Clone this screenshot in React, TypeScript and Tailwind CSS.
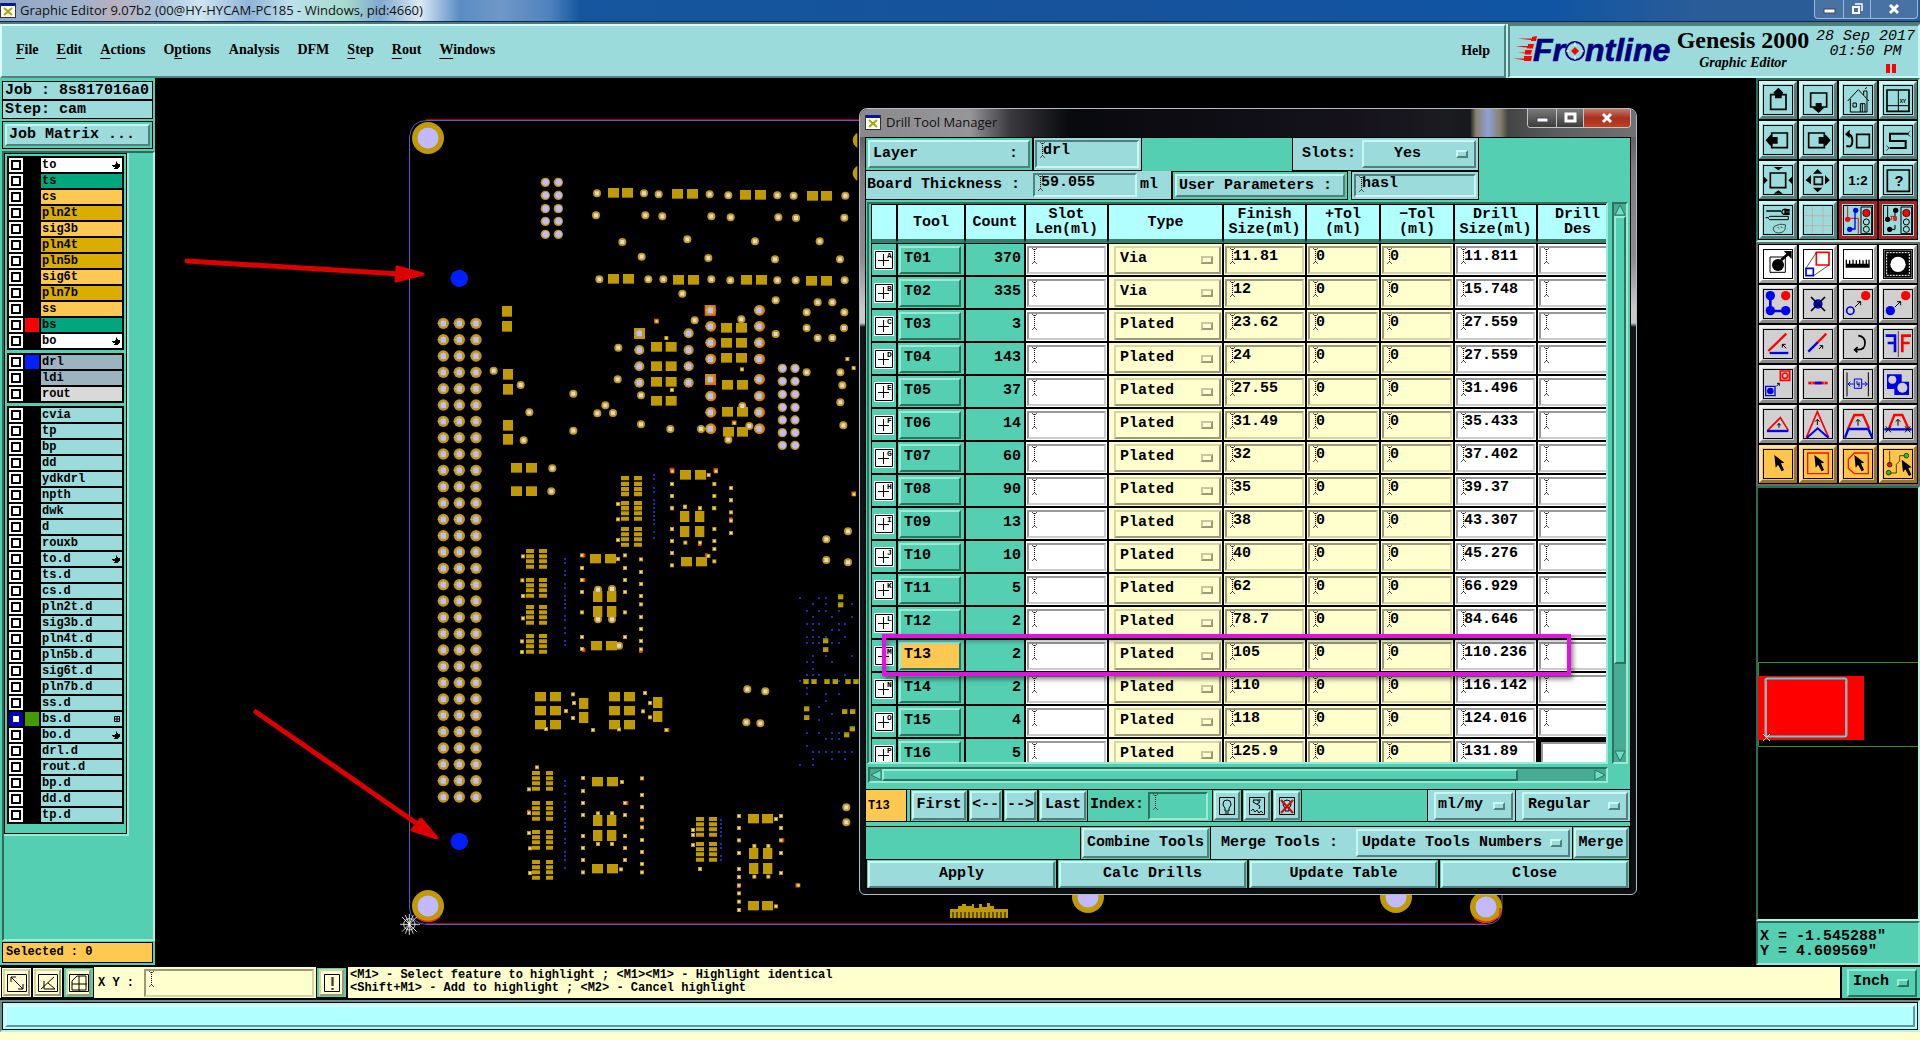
import React from "react";

const MONO = "font-['Liberation_Mono','DejaVu_Sans_Mono',monospace] font-bold";
const SERIF = "font-['Liberation_Serif',serif] font-bold";
const UI = "font-['Open_Sans','Noto_Sans',sans-serif]";

const OUT = "border-2 border-t-[#c9f7f3] border-l-[#c9f7f3] border-b-[#52807f] border-r-[#52807f]";
const IN = "border-2 border-t-[#52807f] border-l-[#52807f] border-b-[#c9f7f3] border-r-[#c9f7f3]";
const OUT_GREEN = "border-2 border-t-[#98ecd6] border-l-[#98ecd6] border-b-[#2b735f] border-r-[#2b735f]";
const IN_GREEN = "border-2 border-t-[#2b735f] border-l-[#2b735f] border-b-[#98ecd6] border-r-[#98ecd6]";
const OUT_YELLOW = "border-2 border-t-[#d5d5a8] border-l-[#d5d5a8] border-b-[#9a9a78] border-r-[#9a9a78]";
const IN_YELLOW = "border-2 border-t-[#9a9a78] border-l-[#9a9a78] border-b-[#d5d5a8] border-r-[#d5d5a8]";
const IN_WHITE = "border-2 border-t-[#989898] border-l-[#989898] border-b-[#cccccc] border-r-[#cccccc]";

/* ---------- small shared parts ---------- */

function XIcon() {
  return (
    <svg viewBox="0 0 16 15" className="h-[15px] w-4 shrink-0">
      <rect x="0" y="0" width="16" height="15" fill="#333" />
      <rect x="1" y="0" width="14" height="3" fill="#0a12a0" />
      <rect x="1" y="3" width="14" height="11" fill="#fff" />
      <path d="M4 5l8 7M12 5l-8 7" stroke="#a8a800" strokeWidth="2" />
    </svg>
  );
}

function Beam() {
  return (
    <svg viewBox="0 0 5 16" className="pointer-events-none absolute left-[3px] top-0 h-4 w-[5px]">
      <path d="M0.5 0v1M4.5 0v1M0.5 15v1M4.5 15v1M1.5 1v1M3.5 1v1M1.5 14v1M3.5 14v1" stroke="#555" />
      <path d="M2.5 1v14" stroke="#000" strokeDasharray="1 1" />
    </svg>
  );
}

function Field({ label, value, box, width = "w-full" }: { label: string; value: string; box: string; width?: string }) {
  return (
    <span className={`relative block h-[28px] ${width} ${box}`}>
      <Beam />
      <input aria-label={label} defaultValue={value} className="block h-[18px] w-full bg-transparent pl-[6px] text-[15px] leading-[18px] outline-none" />
    </span>
  );
}

function Picker({ label, value, box, mark, pad = "pl-1", id }: { label: string; value: string; box: string; mark: string; pad?: string; id?: string }) {
  return (
    <span className={`relative block h-[28px] w-full ${box}`}>
      <select id={id} aria-label={label} className={`block h-full w-full appearance-none bg-transparent text-[15px] outline-none ${pad}`}>
        <option>{value}</option>
      </select>
      <span className={`pointer-events-none absolute right-[6px] top-[8px] h-2 w-3 ${mark}`} />
    </span>
  );
}

/* ---------- top bars ---------- */

const MENUS: [string, number][] = [
  ["File", 0], ["Edit", 0], ["Actions", 0], ["Options", 1], ["Analysis", -1], ["DFM", -1], ["Step", 0], ["Rout", 0], ["Windows", 0],
];

function MinGlyph() {
  return <svg viewBox="0 0 14 12" className="mx-auto h-3 w-[14px]"><rect x="2" y="6" width="11" height="4" fill="#fff" stroke="#445" strokeWidth="1" /></svg>;
}
function MaxGlyph() {
  return <svg viewBox="0 0 14 12" className="mx-auto h-3 w-[14px]"><rect x="3" y="2" width="9" height="7" fill="none" stroke="#fff" strokeWidth="3" /></svg>;
}
function RestoreGlyph() {
  return (
    <svg viewBox="0 0 14 12" className="mx-auto h-3 w-[14px]">
      <path d="M5 1h7v7" fill="none" stroke="#fff" strokeWidth="1.5" />
      <rect x="3" y="4" width="6" height="6" fill="none" stroke="#fff" strokeWidth="2" />
    </svg>
  );
}
function CloseGlyph() {
  return <svg viewBox="0 0 14 12" className="mx-auto h-3 w-[14px]"><path d="M3 2l8 8M11 2l-8 8" stroke="#fff" strokeWidth="3" /></svg>;
}

function TitleBar() {
  return (
    <header className={`flex h-[22px] items-start justify-between overflow-hidden border-b border-[#0b2a50] bg-[linear-gradient(90deg,#8fa6c6_0px,#9fb3cc_80px,#b9b0bd_115px,#a9c3dd_160px,#cfe6f2_200px,#8fb4d8_250px,#bfe0ee_290px,#a5dccb_345px,#7fa9cf_380px,#dce9f5_420px,#5a8cc4_460px,#7098c8_500px,#4f82bd_550px,#14569f_580px,#17529c_1100px,#0f55a4_1550px,#2a5c98_1700px,#2a5c98_100%)] ${UI}`}>
      <div className="flex items-center gap-1 pt-[2px]">
        <XIcon />
        <h1 className="text-[13px] leading-[16px] text-[#111]">Graphic Editor 9.07b2 (00@HY-HYCAM-PC185 - Windows, pid:4660)</h1>
      </div>
      <div className="mr-[2px] flex h-[19px] rounded-b border border-t-0 border-[#9fb8d6] bg-[#4872a4] text-white">
        <button aria-label="Minimize" className="w-[29px] border-r border-[#9fb8d6]"><MinGlyph /></button>
        <button aria-label="Restore" className="w-[27px] border-r border-[#9fb8d6]"><RestoreGlyph /></button>
        <button aria-label="Close" className="w-[46px]"><CloseGlyph /></button>
      </div>
    </header>
  );
}

function Logo() {
  return (
    <svg viewBox="0 -8 160 46" className="h-[46px] w-[160px] shrink-0" role="img" aria-label="Frontline">
      <path
        d="M5 2.500h14v-1.500l5-1-1 5h-5v-1zM2 10h13v-2l6 0-1 4.500h-6v-1zM5 16.500h7v-2.500h7l-1 4.500h-6v-1zM0 22.500h11v-2.500h8l-1 5h-7v-1z"
        fill="#f00"
      />
      <g fill="#00007c" stroke="#00007c" strokeWidth="0.600" fontFamily="Liberation Sans" fontWeight="bold" fontStyle="italic" fontSize="32">
        <text x="20" y="25">Fr</text>
        <text x="72" y="25">ntline</text>
      </g>
      <circle cx="62" cy="15" r="9" fill="#9cdbdb" stroke="#00007c" strokeWidth="2" />
      <path d="M62 6v4M62 20v4M53 15h3M68 15h3" stroke="#fff" strokeWidth="1" />
      <path d="M62 11l4 4-4 4-4-4z" fill="#f00" />
    </svg>
  );
}

function MenuBar() {
  return (
    <div className="flex h-[56px] border-t-2 border-[#507878] bg-[#b9f2ee] text-black">
      <nav className={`flex flex-1 items-center justify-between border-2 border-t-[#d8fbf8] border-l-[#d8fbf8] border-b-[#52807f] border-r-[#52807f] bg-[#9cdbdb] pb-[2px] pl-[14px] pr-[14px] text-[14px] ${SERIF}`}>
        <div className="flex gap-[18px]">
          {MENUS.map(([name, u]) => (
            <button key={name} className="leading-5">
              {u < 0 ? name : (<>{name.slice(0, u)}<span className="underline underline-offset-4">{name[u]}</span>{name.slice(u + 1)}</>)}
            </button>
          ))}
        </div>
        <button>Help</button>
      </nav>
      <div className={`ml-[2px] flex w-[412px] items-center bg-[#9cdbdb] pl-[3px] ${IN}`}>
        <Logo />
        <div className={`flex w-[140px] flex-col items-center pb-[6px] ${SERIF}`}>
          <span className="whitespace-nowrap text-[24px] leading-[28px]">Genesis 2000</span>
          <span className="pt-px text-[14px] italic leading-4">Graphic Editor</span>
        </div>
        <div className={`flex flex-1 flex-col items-center text-[15px] italic leading-[15px] ${MONO}`}>
          <span className="whitespace-nowrap font-normal">28 Sep 2017</span>
          <span className="font-normal">01:50 PM</span>
          <span className="mr-[22px] mt-[5px] flex gap-[2px] self-end">
            <span className="h-[9px] w-1 bg-[#f00]" />
            <span className="h-[9px] w-1 bg-[#f00]" />
          </span>
        </div>
      </div>
    </div>
  );
}

/* ---------- layer list ---------- */

type Layer = { n: string; bg?: string; sw?: string; mark?: "hand" | "grid"; on?: boolean };
const W = "bg-white", G = "bg-[#00a67e]", O = "bg-[#ffc850]", D = "bg-[#daad00]", S = "bg-[#9cb4c0]";
const GROUPS: Layer[][] = [
  [
    { n: "to", bg: W, mark: "hand" }, { n: "ts", bg: G }, { n: "cs", bg: O }, { n: "pln2t", bg: D }, { n: "sig3b", bg: O }, { n: "pln4t", bg: D },
    { n: "pln5b", bg: D }, { n: "sig6t", bg: O }, { n: "pln7b", bg: D }, { n: "ss", bg: O }, { n: "bs", bg: G, sw: "bg-[#f00]" }, { n: "bo", bg: W, mark: "hand" },
  ],
  [{ n: "drl", bg: S, sw: "bg-[#0020ff]" }, { n: "ldi", bg: S }, { n: "rout", bg: "bg-[#d9d9d9]" }],
  [
    { n: "cvia" }, { n: "tp" }, { n: "bp" }, { n: "dd" }, { n: "ydkdrl" }, { n: "npth" }, { n: "dwk" }, { n: "d" }, { n: "rouxb" }, { n: "to.d", mark: "hand" },
    { n: "ts.d" }, { n: "cs.d" }, { n: "pln2t.d" }, { n: "sig3b.d" }, { n: "pln4t.d" }, { n: "pln5b.d" }, { n: "sig6t.d" }, { n: "pln7b.d" }, { n: "ss.d" },
    { n: "bs.d", sw: "bg-[#419c00]", mark: "grid", on: true }, { n: "bo.d", mark: "hand" }, { n: "drl.d" }, { n: "rout.d" }, { n: "bp.d" }, { n: "dd.d" }, { n: "tp.d" },
  ],
];

function LayerMark({ kind }: { kind: "hand" | "grid" }) {
  return kind === "hand" ? (
    <svg viewBox="0 0 8 8" className="h-2 w-2"><path d="M0 4h3V3h1V1l1-1v2h1v1h2v3H7v1H6v1H2V7h1V6H1V5H0z" /></svg>
  ) : (
    <svg viewBox="0 0 6 6" className="h-[6px] w-[6px]"><path d="M.5.5h5v5h-5zM3 0v6M0 3h6" fill="none" stroke="#000" /></svg>
  );
}

function LayerRow({ l }: { l: Layer }) {
  return (
    <label className="flex h-4 items-center gap-[2px] pl-[2px]">
      <input
        type="checkbox"
        defaultChecked={l.on}
        className="h-[14px] w-[14px] shrink-0 appearance-none border-2 border-white bg-white shadow-[inset_0_0_0_2px_#000] checked:border-[#0000b8] checked:shadow-[inset_0_0_0_2px_#0000b8]"
      />
      <span className={`h-[14px] w-[14px] shrink-0 ${l.sw ?? "bg-black"}`} />
      <span className={`flex h-[14px] flex-1 items-center justify-between pl-px pr-[2px] leading-[14px] ${l.bg ?? "bg-[#9cdbdb]"}`}>
        {l.n}
        {l.mark && <LayerMark kind={l.mark} />}
      </span>
    </label>
  );
}

function LeftPanel() {
  return (
    <aside className={`z-10 flex w-[155px] shrink-0 flex-col bg-[#54cfb2] pb-px pl-[2px] pt-[3px] text-[15px] ${MONO}`}>
      <div className="mr-[2px] flex flex-col border-b-2 border-[#54cfb2]">
        <div className="h-[19px] border border-black bg-[#9cdbdb] pl-[2px] leading-[17px]">Job : 8s817016a0</div>
        <div className="h-[19px] border border-black bg-[#9cdbdb] pl-[2px] leading-[17px]">Step: cam</div>
      </div>
      <div className="mb-[2px] mr-[2px] border border-black p-[2px]">
        <button className={`block h-[22px] w-full bg-[#9cdbdb] pl-[2px] text-left leading-[18px] ${OUT}`}>Job Matrix ...</button>
      </div>
      <div className="flex-1 border-2 border-b-[#98ecd6] border-l-[#2b6b58] border-r-[#b5f2e2] border-t-[#2b6b58] text-[12px]">
        <div className="w-[125px] border-b-2 border-r-2 border-[#98ecd6]">
          <div className="flex flex-col gap-[3px] border border-black p-[2px] pb-[9px]">
            {GROUPS.map((g, i) => (
              <div key={i} className="bg-black py-px pr-[2px]">
                {g.map((l) => <LayerRow key={l.n} l={l} />)}
              </div>
            ))}
          </div>
        </div>
      </div>
      <div className="mb-px mr-[2px] mt-px h-[21px] border border-black bg-[#ffc850] pl-[3px] text-[12px] leading-[19px]">Selected : 0</div>
    </aside>
  );
}

/* ---------- board drawing ---------- */

type P = [number, number];
const GOLD = "#bf9a00", LAV = "#c2b9ff";

function Big({ x, y, edge }: { x: number; y: number; edge?: boolean }) {
  return (
    <g>
      {edge && <circle cx={x + 2} cy={y} r="16" fill="#ff5a00" />}
      <circle cx={x} cy={y} r="15" fill={GOLD} />
      <rect x={x - 8} y={y - 8} width="16" height="17" fill={LAV} />
      <path d={`M${x} ${y - 12}v5M${x - 15} ${y}h8`} stroke={LAV} strokeWidth="2" />
    </g>
  );
}
function Via({ x, y }: { x: number; y: number }) {
  return <g><circle cx={x} cy={y} r="12" fill={GOLD} /><rect x={x - 6} y={y - 6} width="12" height="12" fill="#ddd2e8" /></g>;
}
function Dot({ x, y }: { x: number; y: number }) {
  return <g><rect x={x - 6} y={y - 6} width="12" height="12" fill={GOLD} /><rect x={x - 3} y={y - 3} width="6" height="6" fill="#e6dcc4" /></g>;
}
const col = (x: number, ys: number[]): P[] => ys.map((y) => [x, y]);

const UP_VIAS: P[] = [
  [591, 250], [732, 250], [776, 253], [929, 253], [985, 256], [1132, 256], [1181, 257], [1336, 257],
  [588, 316], [736, 316], [787, 319], [934, 319], [992, 322], [1135, 322], [1188, 324], [1333, 323],
  [667, 396], [862, 388], [1065, 394], [1259, 394], [725, 440], [925, 444], [1125, 448], [1320, 448],
  [598, 508], [745, 508], [790, 508], [934, 508], [991, 511], [1132, 511], [1187, 511], [1334, 511],
  [847, 551], [1127, 571], [1127, 672], [884, 631], [655, 713], [653, 808], [1024, 628],
  [1253, 577], [1297, 577], [1220, 607], [1333, 607], [1220, 654], [1332, 654], [1253, 684], [1297, 684],
  [281, 782], [362, 825], [388, 907], [371, 991], [457, 1075], [454, 1144], [520, 851], [520, 962],
  [616, 886], [592, 910], [639, 909], [723, 856], [723, 943], [811, 957], [903, 957], [1048, 948], [1027, 888], [985, 989],
  [1220, 787], [1321, 787], [1327, 826], [1321, 877], [1330, 946],
];
const UP_BIG: P[] = [...col(718, [670, 720, 769, 818]), ...col(866, [670, 720, 769, 818])];
const UP_EDGE: P[] = [...col(931, [601, 649, 698, 747, 808, 858, 907, 956]), ...col(1077, [601, 649, 698, 747, 808, 858, 907, 956])];
const UP_MED: P[] = [
  ...col(436, [217, 256, 296, 334, 373]), ...col(475, [217, 256, 296, 334, 373]),
  ...col(1147, [775, 814, 853, 892, 930, 968, 1006]), ...col(1185, [775, 814, 853, 892, 930, 968, 1006]),
];
const UP_PADS: P[] = [
  [624, 234], [666, 234], [816, 237], [861, 237], [1020, 240], [1065, 240], [1221, 243], [1263, 243],
  [624, 492], [669, 492], [819, 495], [864, 495], [1023, 495], [1068, 495], [1218, 498], [1263, 498],
  [753, 696], [797, 696], [753, 754], [797, 754], [753, 801], [797, 801], [753, 858], [797, 858],
  [963, 639], [1008, 639], [963, 684], [1008, 684], [963, 729], [1008, 729], [966, 810], [1011, 810], [966, 891], [1011, 891], [969, 951], [1011, 951],
  [333, 1059], [378, 1059], [333, 1129], [378, 1129], [840, 1080], [885, 1080],
];
const UP_TALL: P[] = [[306, 588], [306, 633], [309, 777], [309, 822], [309, 930], [309, 972]];
const UP_DOTS: P[] = [
  [770, 634], [799, 684], [1026, 778], [816, 840], [1003, 939], [1342, 747], [1361, 774], [817, 1084], [948, 1084], [926, 1095],
  [816, 1122], [943, 1122], [816, 1158], [943, 1158], [993, 1134], [993, 1170], [816, 1194], [855, 1191], [900, 1194], [942, 1194], [655, 1182], [1362, 1153],
];
const UP_RED: P[] = [[770, 634], [1003, 939], [817, 1081], [948, 1082], [1362, 1152]];
const UP_BLUE: P[] = col(762, [1095, 1107, 1134, 1146, 1170, 1182]);

const LOW_CHIPS: P[] = [
  [378, 147], [378, 234], [378, 315], [378, 402], [396, 813], [396, 903], [396, 990], [396, 1080],
  [663, 81], [888, 951], [888, 1026], [663, 3],
];
const LOW_PADS: P[] = [
  [570, 162], [615, 162], [573, 423], [618, 423], [576, 831], [621, 831], [576, 1092], [621, 1092],
  [843, 171], [888, 171], [405, 576], [450, 576], [405, 618], [450, 618], [405, 660], [450, 660],
  [627, 576], [672, 576], [627, 618], [672, 618], [627, 660], [672, 660],
  [1044, 942], [1086, 942], [1044, 1203], [1086, 1203],
];
const LOW_TALL: P[] = [
  [537, 594], [537, 636], [759, 591], [759, 633], [579, 273], [621, 273], [579, 318], [621, 318],
  [840, 33], [885, 33], [840, 78], [885, 78], [579, 945], [621, 945], [579, 990], [621, 990],
  [1047, 1044], [1089, 1044], [1047, 1089], [1089, 1089],
];
const LOW_DOTS: P[] = [
  ...col(546, [166, 204, 240, 276, 337, 411, 447]), ...col(675, [166, 204, 240, 276, 337, 411]), ...col(723, [178, 216, 252, 288, 313, 351, 387, 423, 448]),
  ...col(549, [834, 873, 909, 945, 1008, 1044, 1080, 1117]), ...col(675, [909, 945, 1008, 1044, 1080]), ...col(726, [835, 885, 921, 958, 982, 1020, 1056, 1092, 1117]),
  ...col(816, [25, 87, 123, 159, 196]), ...col(943, [25, 87, 123, 147, 184]), ...col(993, [1, 37, 62, 99]),
  ...col(1017, [948, 984, 1021, 1059, 1107, 1131, 1156, 1180, 1205, 1230]), ...col(1143, [948, 984, 1021, 1059, 1119]),
  [369, 169], [367, 241], [369, 288], [369, 355], [366, 424], [366, 456], [654, 12], [654, 58], [654, 120], [855, 20], [900, 25], [856, 128], [900, 128], [925, 168],
  [654, 177], [519, 583], [522, 609], [498, 633], [519, 654], [438, 687], [579, 690],
  [735, 579], [750, 609], [729, 634], [750, 652], [657, 688], [799, 690], [411, 802], [387, 868], [387, 939], [387, 999], [390, 1045], [390, 1119],
  [666, 846], [663, 1108], [594, 940], [636, 940], [594, 1032], [636, 1032], [879, 990], [879, 1005], [879, 1035], [900, 1107],
  [1128, 957], [1128, 1219], [1063, 1038], [1105, 1038], [1063, 1130], [1105, 1130], [1195, 1156],
];
const RED_TICKS: P[] = [[552, 166], [552, 240], [552, 450], [723, 453], [372, 288], [387, 935], [681, 909], [726, 960], [993, 58], [900, 132], [921, 166], [1149, 1021], [1017, 1158], [1192, 1156], [804, 690]];
const LOW_VIAS: P[] = [
  [1279, 118], [1344, 94], [1279, 180], [1344, 187], [1042, 568], [1096, 574], [1039, 667], [1081, 670], [1339, 922], [1339, 967],
  [594, 269], [636, 267], [594, 358], [636, 358], [657, 437],
];
const LOW_BLUE: P[] = [
  ...col(495, [177, 189, 213, 225, 252, 264, 288, 300, 312, 324, 348, 360, 384, 399, 423, 435]),
  ...col(495, [843, 858, 882, 906, 921, 933, 957, 969, 981, 993, 1017, 1029, 1056, 1068, 1080, 1104]),
  ...col(762, [1, 12, 24, 36, 48, 60, 72, 96, 114]), ...col(963, [960, 972, 984, 996, 1008, 1032, 1044, 1068, 1080]),
  ...col(1200, [294, 543, 795]), ...col(1221, [333, 372, 411, 429, 486, 525, 564, 582, 699, 738]), ...col(1239, [312, 351, 372, 390, 411, 429, 468, 486, 507, 525, 756, 777, 795]),
  ...col(1257, [294, 333, 372, 411, 429, 525, 621, 660, 699, 756]), ...col(1278, [294, 312, 333, 411, 468, 582, 603, 717, 756]),
  ...col(1296, [351, 390, 429, 486, 642, 699, 717, 756, 777]), ...col(1317, [333, 372, 390, 429, 582, 543, 699, 717, 756]), ...col(1335, [372, 411, 525, 756, 777]), ...col(1356, [312, 351, 468, 756]),
];
const LOW_MINI: P[] = [[1314, 283], [1314, 307], [1269, 415], [1269, 441], [1210, 537], [1234, 537], [1273, 537], [1298, 537], [1336, 537], [1212, 619], [1212, 645], [1326, 627], [1350, 627], [1332, 697], [1349, 679], [1360, 537]];

function Board() {
  const main: P[] = [];
  for (let i = 0; i < 30; i++) for (const x of [130, 178, 228]) main.push([x, 640 + Math.round(i * 49)]);
  return (
    <svg viewBox="155 78 1602 887" className="absolute left-0 top-0 h-[887px] w-[1602px]" aria-label="Board view">
      <path d="M426 119.500H1486M426 923.500H1486" stroke="#a00000" />
      <path d="M409.500 908V137Q411 120.500 427 120.500H1485Q1502 121 1502 137V908Q1502 924.500 1485 924.500H427Q411 924 409.500 908Z" fill="none" stroke="#5a5ac8" />
      {[[428, 138], [428, 906], [1486, 138], [1486, 907], [1088, 897], [1396, 897]].map(([x, y]) => (
        <g key={`${x}-${y}`}>
          <circle cx={x} cy={y} r="16" fill={GOLD} />
          <circle cx={x} cy={y} r="10.500" fill={LAV} />
        </g>
      ))}
      <path d="M416 917q12 9 24 0M1474 918q14 9 26-2v-8" stroke="#e22" strokeWidth="1.500" fill="none" />
      <path d="M950 909h8v-3h4v-2h4v2h6v-2h2v4h5v-4h3v3h5v-4h3v3h4v3h14v9h-58z" fill={GOLD} />
      <path d="M953 912v6M957 912v6M961 912v6M965 912v6M969 912v6M973 912v6M977 912v6M981 912v6M985 912v6M989 912v6M993 912v6M997 912v6M1001 912v6M1005 912v6" stroke="#000" />
      <g transform="translate(400 110) scale(0.33333)">
        {main.map(([x, y]) => (
          <g key={`m${x}-${y}`}>
            <circle cx={x} cy={y} r="17" fill={GOLD} />
            <rect x={x - 8} y={y - 8} width="16" height="17" fill={LAV} />
            <path d={`M${x} ${y - 13}v6M${x - 17} ${y}h9`} stroke={LAV} strokeWidth="2" />
          </g>
        ))}
        {UP_MED.map(([x, y], i) => <g key={i}><circle cx={x} cy={y} r="14" fill={GOLD} /><circle cx={x + 1} cy={y} r="10" fill={LAV} /></g>)}
        <path d="M914 585h33v32h-33zM915 792h33v33h-33z" fill="#ff5a00" />
        <path d="M702 654h33v33h-33zM918 588h28v28h-28zM916 792h29v31h-29z" fill={GOLD} />
        {UP_PADS.map(([x, y], i) => <rect key={i} x={x} y={y} width="33" height="29" fill={GOLD} />)}
        {UP_TALL.map(([x, y], i) => <rect key={i} x={x} y={y} width="30" height="32" fill={GOLD} />)}
        {UP_EDGE.map(([x, y], i) => <Big key={i} x={x} y={y} edge />)}
        {UP_BIG.map(([x, y], i) => <Big key={i} x={x} y={y} />)}
        {UP_VIAS.map(([x, y], i) => <Via key={i} x={x} y={y} />)}
        {[1098, 1115, 1131, 1146, 1173, 1188].map((y) => <path key={y} d={`M663 ${y}h24v13h-24zM702 ${y}h24v13h-24z`} fill={GOLD} />)}
        {UP_RED.map(([x, y], i) => <rect key={i} x={x - 8} y={y - 8} width="14" height="14" fill="#e03000" />)}
        {UP_DOTS.map(([x, y], i) => <Dot key={i} x={x} y={y} />)}
        {UP_BLUE.map(([x, y], i) => <rect key={i} x={x - 3} y={y - 3} width="6" height="6" fill="#1c2cb4" />)}
        <path d="M1372 68q-14 10-14 23t14 23zM1372 167q-14 10-14 23t14 23z" fill={GOLD} />
        <circle cx="178" cy="505" r="26" fill="#0020ff" />
      </g>
      <g transform="translate(400 500) scale(0.33333)">
        {LOW_CHIPS.map(([x, y], i) => (
          <path
            key={i}
            d={[0, 16, 31, 47].map((o) => `M${x} ${y + o}h24v12h-24zM${x + (x === 396 ? 42 : 39)} ${y + o}h${x === 396 ? 21 : 24}v12h-${x === 396 ? 21 : 24}z`).join("")}
            fill={GOLD}
          />
        ))}
        {LOW_PADS.map(([x, y], i) => <rect key={i} x={x} y={y} width="33" height="28" fill={GOLD} />)}
        {LOW_TALL.map(([x, y], i) => <rect key={i} x={x} y={y} width="28" height="33" fill={GOLD} />)}
        {LOW_BLUE.map(([x, y], i) => <rect key={i} x={x - 3} y={y - 3} width="6" height="6" fill="#1c2cb4" />)}
        {RED_TICKS.map(([x, y], i) => <rect key={i} x={x - 6} y={y - 6} width="10" height="12" fill="#f33000" />)}
        {LOW_DOTS.map(([x, y], i) => <Dot key={i} x={x} y={y} />)}
        {LOW_VIAS.map(([x, y], i) => <Via key={i} x={x} y={y} />)}
        {LOW_MINI.map(([x, y], i) => <g key={i}><rect x={x} y={y} width="16" height="15" fill={GOLD} /><path d={`M${x} ${y + 2}h14`} stroke="#4a9c10" strokeWidth="3" /></g>)}
        <circle cx="178" cy="1024" r="26" fill="#0020ff" />
        <path d="M28 1242v63M0 1273h60M6 1251l44 44M50 1251l-44 44M16 1245l24 56M40 1245l-24 56" stroke="#fff" strokeWidth="2.500" />
        <circle cx="28" cy="1273" r="17" fill="none" stroke="#fff" strokeWidth="2.500" />
      </g>
      <g stroke="#dc0000" fill="#dc0000" strokeLinejoin="round" strokeLinecap="round">
        <path d="M187 261L400 274" strokeWidth="5" />
        <path d="M397 267L423 274L396 281Z" strokeWidth="3" />
        <path d="M256 712L416 823" strokeWidth="5" />
        <path d="M421 819L437 838L412 830Z" strokeWidth="3" />
      </g>
    </svg>
  );
}

/* ---------- drill dialog ---------- */

type Row = { t: string; c: number; type: string; fin: string; dr: string };
const ROWS: Row[] = [
  ["T01", 370, "Via", "11.81", "11.811"], ["T02", 335, "Via", "12", "15.748"], ["T03", 3, "Plated", "23.62", "27.559"], ["T04", 143, "Plated", "24", "27.559"],
  ["T05", 37, "Plated", "27.55", "31.496"], ["T06", 14, "Plated", "31.49", "35.433"], ["T07", 60, "Plated", "32", "37.402"], ["T08", 90, "Plated", "35", "39.37"],
  ["T09", 13, "Plated", "38", "43.307"], ["T10", 10, "Plated", "40", "45.276"], ["T11", 5, "Plated", "62", "66.929"], ["T12", 2, "Plated", "78.7", "84.646"],
  ["T13", 2, "Plated", "105", "110.236"], ["T14", 2, "Plated", "110", "116.142"], ["T15", 4, "Plated", "118", "124.016"], ["T16", 5, "Plated", "125.9", "131.89"],
].map(([t, c, type, fin, dr]) => ({ t, c, type, fin, dr }) as Row);

const COLS = [26, 68, 60, 83, 115, 83, 74, 74, 83, 81];
const HEADS = ["", "Tool", "Count", "Slot\nLen(ml)", "Type", "Finish\nSize(ml)", "+Tol\n(ml)", "−Tol\n(ml)", "Drill\nSize(ml)", "Drill\nDes"];

const MARK_TEAL = "border-2 border-t-[#c9f7f3] border-l-[#c9f7f3] border-b-[#52807f] border-r-[#52807f]";
const MARK_YELLOW = "border-2 border-t-[#c8c8a0] border-l-[#c8c8a0] border-b-[#9a9a78] border-r-[#9a9a78]";
const MARK_GREEN = "border-2 border-t-[#98ecd6] border-l-[#98ecd6] border-b-[#2b735f] border-r-[#2b735f]";

function DrillTable() {
  const cell = "h-[33px] border border-black px-px py-0";
  return (
    <table className="w-[747px] table-fixed border-separate border-spacing-0 text-[15px]">
      <colgroup>{COLS.map((w, i) => <col key={i} style={{ width: w }} />)}</colgroup>
      <thead>
        <tr>
          {HEADS.map((h, i) => (
            <th key={i} className="h-[39px] whitespace-pre border-x border-b-4 border-t border-x-black border-b-[#35806d] border-t-black bg-[#b2ffff] p-0 text-center font-bold leading-[15px]">{h}</th>
          ))}
        </tr>
      </thead>
      <tbody>
        {ROWS.map((r, i) => (
          <tr key={r.t}>
            <td className={`${cell} bg-[#54cfb2]`}>
              <button aria-label={`Symbol ${r.t}`} className="mx-auto block h-5 w-5 border border-white bg-white">
                <svg viewBox="0 0 18 18" className="h-[18px] w-[18px]">
                  <path d="M.5.5h17v17h-17zM8.500 3v12M3 9.500h11" fill="none" stroke="#000" />
                  <text x="12" y="7" fontSize="8" fontFamily="Liberation Mono">{"ABCDEFGHIJKLMNOP"[i]}</text>
                </svg>
              </button>
            </td>
            <td className={`${cell} bg-[#54cfb2]`}>
              <button className={`block h-[28px] w-[62px] pl-[3px] text-left ${OUT_GREEN} ${r.t === "T13" ? "bg-[#ffc850]" : ""}`}>{r.t}</button>
            </td>
            <td className={`${cell} bg-[#54cfb2] pr-[3px] text-right`}>{r.c}</td>
            <td className={`${cell} bg-white`}><Field label={`${r.t} slot length`} value="" box={IN_WHITE} /></td>
            <td className={`${cell} bg-[#ffffce] pl-[5px]`}><Picker label={`${r.t} type`} value={r.type} box={OUT_YELLOW} mark={MARK_YELLOW} /></td>
            <td className={`${cell} bg-[#ffffce]`}><Field label={`${r.t} finish size`} value={r.fin} box={IN_YELLOW} /></td>
            <td className={`${cell} bg-[#ffffce]`}><Field label={`${r.t} plus tolerance`} value="0" box={IN_YELLOW} /></td>
            <td className={`${cell} bg-[#ffffce]`}><Field label={`${r.t} minus tolerance`} value="0" box={IN_YELLOW} /></td>
            <td className={`${cell} bg-white`}><Field label={`${r.t} drill size`} value={r.dr} box={IN_WHITE} /></td>
            {r.t === "T16" ? (
              <td className="h-[33px] border-l-4 border-t-4 border-black bg-white p-0 align-top"><span className={`block h-[26px] ${IN_WHITE}`} /></td>
            ) : (
              <td className={`${cell} bg-white`}><Field label={`${r.t} description`} value="" box={IN_WHITE} /></td>
            )}
          </tr>
        ))}
      </tbody>
    </table>
  );
}

function Btn({ children, className = "" }: { children: React.ReactNode; className?: string }) {
  return (
    <div className={`border border-black p-px ${className}`}>
      <button className={`block h-full w-full bg-[#9cdbdb] text-center ${OUT}`}>{children}</button>
    </div>
  );
}

function Tri({ d }: { d: string }) {
  return <svg viewBox="0 0 12 12" className="h-3 w-3 shrink-0"><path d={d} fill="#6fe0c4" stroke="#2b735f" /></svg>;
}

function DrillDialog() {
  return (
    <section className={`absolute left-[704px] top-[30px] w-[778px] rounded-t-lg rounded-b-md border border-[#b8bcc0] bg-[linear-gradient(180deg,#4a4a4c_0px,#7c7d80_60px,#8c8e92_150px,#c8cacc_200px,#c8cacc_214px,#101418_218px,#0c0f12_100%)] px-[5px] pb-[5px] ${MONO}`}>
      <div className={`-mx-[5px] flex h-[28px] items-start justify-between rounded-t-lg bg-[linear-gradient(90deg,#8a8a8c_0px,#969698_110px,#3a3a3e_150px,#08090d_210px,#15121c_500px,#1b1c20_590px,#18191c_605px,#18191c_610px,#8a8070_616px,#8fa0d8_628px,#8a8070_640px,#444_648px,#5c5e62_700px,#707276_100%)] pl-[5px] pr-[5px] ${UI}`}>
        <div className="flex items-center gap-[5px] pt-[5px]">
          <XIcon />
          <h2 className="text-[13px] font-normal leading-4 text-[#111]">Drill Tool Manager</h2>
        </div>
        <div className="flex h-[19px] overflow-hidden rounded-b border border-t-0 border-[#c4c4c4]">
          <button aria-label="Minimize dialog" className="w-[29px] border-r border-[#c4c4c4] bg-[linear-gradient(#7a7a7a,#3c3c3c)]"><MinGlyph /></button>
          <button aria-label="Maximize dialog" className="w-[27px] border-r border-[#c4c4c4] bg-[linear-gradient(#7a7a7a,#3c3c3c)]"><MaxGlyph /></button>
          <button aria-label="Close dialog" className="w-[46px] bg-[linear-gradient(#c4786c,#a8301c_50%,#c04020)]"><CloseGlyph /></button>
        </div>
      </div>
      <div className="border border-black bg-[#54cfb2] text-[15px] text-black">
        <div className="flex h-[33px] items-stretch">
          <div className="w-[167px] border border-l-0 border-t-0 border-black p-[2px]">
            <button className={`flex h-full w-full items-center justify-between bg-[#9cdbdb] pl-[3px] pr-[10px] ${OUT}`}><span>Layer</span><span>:</span></button>
          </div>
          <div className="w-[109px] border border-t-0 border-black bg-[#9cdbdb] p-[2px] pl-px"><Field label="Layer" value="drl" box={IN} /></div>
          <div className="ml-auto mr-[151px] flex w-[187px] items-center border border-t-0 border-black bg-[#9cdbdb] pl-[9px] pr-[2px]">
            <label htmlFor="slots" className="w-[60px] shrink-0">Slots:</label>
            <Picker id="slots" label="Slots" value="Yes" box={OUT} mark={MARK_TEAL} pad="pl-[30px]" />
          </div>
        </div>
        <div className="flex h-[29px] items-stretch">
          <div className="flex w-[306px] items-center border-b border-r border-black bg-[#9cdbdb] pl-px">
            <label className="flex items-center"><span className="w-[166px] whitespace-nowrap">Board Thickness :</span>
              <span className={`relative block h-[24px] w-[104px] ${IN}`}><Beam /><input defaultValue="59.055" className="block h-[16px] w-full bg-transparent pl-[6px] outline-none" /></span>
            </label>
            <span className="pl-[3px]">ml</span>
          </div>
          <div className="w-[176px] border border-black p-[2px]">
            <button className={`block h-full w-full bg-[#9cdbdb] pl-[2px] text-left leading-[19px] ${OUT}`}>User Parameters :</button>
          </div>
          <div className="ml-[3px] w-[128px] border border-black bg-[#9cdbdb] p-[2px]">
            <span className={`relative block h-[23px] ${IN}`}><Beam /><input aria-label="User parameters" defaultValue="hasl" className="block h-[16px] w-full bg-transparent pl-[6px] outline-none" /></span>
          </div>
        </div>

        <div className="mt-[2px] flex pl-px pr-[2px]">
          <div className={`flex-1 overflow-hidden ${IN_GREEN}`}>
            <div className="h-[558px] w-[738px] overflow-hidden pl-[2px]"><DrillTable /></div>
          </div>
          <div className={`ml-1 flex w-4 flex-col items-center bg-[#48ab94] ${IN_GREEN}`}>
            <Tri d="M6 1l5 10H1z" />
            <div className={`h-[448px] w-3 bg-[#54cfb2] ${OUT_GREEN}`} />
            <span className="mt-auto"><Tri d="M1 1h10L6 11z" /></span>
          </div>
        </div>
        <div className={`ml-[2px] mr-[22px] mt-[3px] flex h-4 items-center bg-[#48ab94] ${IN_GREEN}`}>
          <Tri d="M11 1v10L1 6z" />
          <div className={`h-3 w-[636px] bg-[#54cfb2] ${OUT_GREEN}`} />
          <span className="ml-auto"><Tri d="M1 1v10l10-5z" /></span>
        </div>

        <div className="mt-[6px] flex h-[33px] items-stretch border-b border-t border-black">
          <div className="flex w-[41px] items-center border-r border-black bg-[#ffc850] pl-[2px] text-[12px]">T13</div>
          <Btn className="ml-[3px] w-[58px] border-y-0">First</Btn>
          <Btn className="w-[35px] border-y-0">&lt;--</Btn>
          <Btn className="w-[35px] border-y-0">--&gt;</Btn>
          <Btn className="w-[50px] border-y-0">Last</Btn>
          <label className="flex items-center pl-[2px]">Index:
            <span className={`relative ml-1 block h-[28px] w-[60px] ${IN_GREEN}`}><Beam /><input className="block w-full bg-transparent pl-[6px] outline-none" /></span>
          </label>
          <Btn className="ml-1 w-[30px] border-y-0">
            <svg viewBox="0 0 16 18" className="mx-auto h-[18px] w-4"><path d="M.5.5h15v17h-15zM8 3q4 0 4 4 0 2-2 4v3H6v-3Q4 9 4 7q0-4 4-4zM6 16h4" fill="none" stroke="#000" /></svg>
          </Btn>
          <Btn className="w-[30px] border-y-0">
            <svg viewBox="0 0 16 18" className="mx-auto h-[18px] w-4"><path d="M.5.5h15v17h-15zM4 3h8M5 3l-1 2 7 4-1 3M8 3l3 2-3 2M2 14l2-2 2 3 2-2 2 3 2-2 2 2" fill="none" stroke="#000" /></svg>
          </Btn>
          <Btn className="w-[30px] border-y-0">
            <svg viewBox="0 0 16 18" className="mx-auto h-[18px] w-4"><path d="M.5.5h15v17h-15zM8 3q4 0 4 4 0 2-2 4v3H6v-3Q4 9 4 7q0-4 4-4z" fill="none" stroke="#000" /><path d="M2 3l12 13M14 3L2 16" stroke="#e00000" strokeWidth="2" /></svg>
          </Btn>
          <div className="ml-auto flex w-[88px] items-center border-l border-black bg-[#9cdbdb] pl-[6px] pr-[2px]"><Picker label="Units" value="ml/my" box={OUT} mark={MARK_TEAL} pad="pl-[2px]" /></div>
          <div className="flex w-[115px] items-center border-l border-black bg-[#9cdbdb] pl-[6px] pr-[2px]"><Picker label="Display mode" value="Regular" box={OUT} mark={MARK_TEAL} pad="pl-1" /></div>
        </div>
        <div className="mt-1 flex h-[33px] items-stretch justify-end border-t border-black">
          <Btn className="w-[131px] whitespace-nowrap border-y-0">Combine Tools</Btn>
          <div className="flex items-center bg-[#9cdbdb] pl-[10px] pr-[2px]">
            <label htmlFor="merge" className="w-[135px] whitespace-nowrap">Merge Tools :</label>
            <span className="block w-[214px]"><Picker id="merge" label="Merge tools" value="Update Tools Numbers" box={OUT} mark={MARK_TEAL} pad="pl-1" /></span>
          </div>
          <Btn className="w-[58px] border-y-0">Merge</Btn>
        </div>
        <div className="grid h-[29px] grid-cols-4 border-t border-black">
          {["Apply", "Calc Drills", "Update Table", "Close"].map((t) => <Btn key={t} className="border-y-0">{t}</Btn>)}
        </div>
      </div>
      <div className="pointer-events-none absolute left-[22px] top-[525px] h-[42px] w-[689px] border-4 border-[#e014dc] shadow-[2px_3px_5px_rgba(0,0,0,0.5),inset_2px_3px_5px_rgba(0,0,0,0.35)]" />
    </section>
  );
}

/* ---------- right tool palette ---------- */

const k = "#000", r = "#f00", b = "#0000f0";
const line = (d: string, s: string, w = 3, f = "none") => <path d={d} stroke={s} strokeWidth={w} fill={f} />;
const fill = (d: string, f: string) => <path d={d} fill={f} />;
const cursor = (x: number, y: number) => <path transform={`translate(${x} ${y})`} d="M0 0l4 38 7-9 11 20 7-4-9-20 10-2z" fill="#000" />;

const VIEW_TOOLS: [string, React.ReactNode][] = [
  ["Pan up", <>{line("M23 29h46v44H23z", k, 5)}{fill("M46 8l14 14v4h-4v14H36V26h-4v-4z", k)}</>],
  ["Pan down", <>{line("M23 24h48v42H23z", k, 5)}{fill("M38 54h18v12h6v4L47 84 30 70v-4h8z", k)}</>],
  ["Home", <>{line("M14 48L46 14l32 34M22 42v39h50V42M52 81V56h14v25M58 56v25M30 54h10v12H30zM62 30V18h10v22M66 12l6-5", k, 3)}</>],
  ["Window position", <>{line("M12 15h66v64H12z", k, 5)}{line("M46 15v64M12 62h66", k, 3)}<text x="50" y="54" fontSize="16" fontFamily="Liberation Mono">XY</text></>],
  ["Pan left", <>{line("M26 24h47v44H26z", k, 5)}{fill("M8 46l14-16h6v6h16v20H28v6h-6z", k)}</>],
  ["Pan right", <>{line("M17 24h47v44H17z", k, 5)}{fill("M83 46L69 30h-6v6H47v20h16v6h6z", k)}</>],
  ["Previous view", <>{line("M41 28h38v40H41z", k, 5)}{line("M16 28q12 2 12 20t-12 16h-6", k, 6)}{fill("M6 28l14-14v26z", k)}</>],
  ["Snake", <>{line("M20 69h48V48H21V26h56", k, 6)}{line("M10 62l8 7-8 8M74 26l8-8M74 28l8 6", k, 2)}</>],
  ["Zoom in", <>{line("M22 24h46v44H22z", k, 5)}{fill("M32 6h28L46 16zM32 86h28L46 76zM0 32v28l14-14zM90 32v28L76 46z", k)}</>],
  ["Zoom out", <>{line("M34 36h24v22H34z", k, 5)}{fill("M30 26h28L44 12zM30 68h28L44 82zM24 30v28L8 46zM66 30v28l14-12z", k)}</>],
  ["One to two", <text x="45" y="59" textAnchor="middle" fontSize="40" fontWeight="bold" fontFamily="Liberation Sans">1:2</text>],
  ["Query", <>{line("M13 15h66v64H13z", k, 5)}<text x="48" y="64" textAnchor="middle" fontSize="44" fontWeight="bold" fontFamily="Liberation Sans">?</text></>],
  ["Options", <>{line("M10 18h44M56 20q4-10 16-6h6v4H66v6h12v4H68q-10 2-12-8", k, 4)}{line("M8 38h8l4-4h56v10H20l-4-4", k, 3)}{line("M38 82q-12-8-4-18 14-10 34-4-2 8-2 14-6 10-18 10-6 0-10-2zM44 66l4 5M54 64l4 5", k, 2)}</>],
  ["Grid", <>{line("M28 4v82M60 4v82M4 32h82M4 62h82", "#d49a9a", 2)}</>],
];

const TRAFFIC = (
  <>{line("M54 6h32v80H54z", k, 3)}<circle cx="70" cy="24" r="11" fill={r} stroke={k} strokeWidth="2" /><circle cx="70" cy="51" r="9" fill="#9cdbdb" stroke={k} strokeWidth="3" /><circle cx="70" cy="73" r="9" fill="#9cdbdb" stroke={k} strokeWidth="3" /></>
);

const SNAP_TOOLS: [string, React.ReactNode][] = [
  ["Net colors", <>{line("M14 4v36h32v46", r, 3)}{line("M36 16v56H18", b, 4)}<circle cx="14" cy="43" r="8" fill={r} /><circle cx="38" cy="16" r="8" fill={b} /><circle cx="20" cy="73" r="8" fill={b} />{TRAFFIC}</>],
  ["Net check", <>{line("M14 4v36M36 16v30M36 60v13H18", k, 3)}{line("M22 34h16M26 34v12M32 34v12M40 34v12h-8", r, 3)}<circle cx="14" cy="43" r="8" /><circle cx="38" cy="16" r="8" /><circle cx="20" cy="73" r="8" />{TRAFFIC}</>],
];

const EDIT_TOOLS: [string, string, React.ReactNode][] = [
  ["w", "Copy pad", <>{line("M21 24h46v46H21z", k, 3)}<circle cx="45" cy="48" r="18" />{line("M54 34l22-20", k, 8)}{fill("M62 6h24v24z", k)}</>],
  ["w", "Reshape", <>{line("M40 10h38v38H40z", r, 5)}{line("M9 58h22v22H9z", b, 5)}{line("M40 10L10 56M78 48L32 80", k, 2)}</>],
  ["w", "Measure", <>{fill("M8 32h4v12h6V34h4v10h6V32h4v12h6V34h4v10h6V32h4v12h6V34h4v10h6V32h4v12h4V32h4v24H8z", k)}</>],
  ["w", "Surface", <>{fill("M4 4h82v82H4z", k)}<path d="M11 11h68v68H11z" fill="none" stroke="#fff" strokeWidth="3" strokeDasharray="6 3" /><circle cx="45" cy="46" r="23" fill="#fff" /></>],
  ["g", "Connect", <>{line("M22 20v46h46", b, 8)}<circle cx="22" cy="20" r="14" fill={b} /><circle cx="22" cy="65" r="14" fill={b} /><circle cx="68" cy="65" r="14" fill={b} /><circle cx="68" cy="20" r="14" fill={r} /></>],
  ["g", "Delete", <><circle cx="45" cy="45" r="14" fill={b} />{line("M24 24l42 42M66 24L24 66", k, 5)}</>],
  ["g", "Move", <><circle cx="68" cy="20" r="14" fill={r} /><circle cx="22" cy="65" r="11" fill="none" stroke={b} strokeWidth="5" />{line("M36 54l16-16M42 38h11v11", k, 3)}</>],
  ["g", "Copy", <><circle cx="68" cy="20" r="14" fill={r} /><circle cx="22" cy="65" r="14" fill={b} />{line("M36 54l16-16M42 38h11v11", k, 3)}</>],
  ["g", "Rotate line", <>{line("M16 66L70 14", r, 7)}{line("M20 72h56", b, 7)}{line("M70 58L58 46M58 56V46h10", k, 3)}</>],
  ["g", "Extend line", <>{line("M42 42L70 14", r, 7)}{line("M16 68l28-28", b, 7)}{line("M48 60l10-10M50 50h9v9", k, 3)}</>],
  ["g", "Rotate", <>{line("M46 20q20 2 20 22T46 62H36M44 54l-9 8 8 8", k, 5)}</>],
  ["g", "Mirror", <>{line("M8 20h28v50M36 42H14", b, 8)}{line("M46 6v78", k, 2)}{line("M84 20H58v50M58 42h22", r, 8)}</>],
  ["g", "Move symbol", <>{line("M52 6h28v28H52z", r, 5)}<circle cx="66" cy="20" r="8" fill="none" stroke={r} strokeWidth="5" />{line("M8 52h28v28H8z", b, 4)}<circle cx="22" cy="66" r="10" fill={b} />{line("M40 52l8-8M42 43h7v7", k, 3)}</>],
  ["g", "Merge lines", <>{line("M16 42h58", r, 8)}{line("M36 42h20", b, 8)}{line("M24 42h5M62 42h4", "#d0d0d0", 3)}</>],
  ["g", "Spacing", <>{line("M12 10v72M76 10v72", k, 3)}{line("M16 45h16M56 45h16M22 38l-7 7 7 7M66 38l7 7-7 7M34 30h22v28H34zM42 36v10h8M48 40v14", b, 3)}</>],
  ["g", "Contour", <>{fill("M12 16h44v22h22v40H34V60H12z", b)}<circle cx="28" cy="32" r="12" fill="#d0d0d0" /><circle cx="58" cy="56" r="15" fill="#d0d0d0" /></>],
  ["g", "Slide triangle", <>{line("M14 64L52 26l24 38", r, 5)}{line("M12 66h64", b, 7)}{line("M48 56V44M43 49l5-6 5 6", k, 3)}</>],
  ["g", "Slide peak", <>{line("M10 86L43 8l34 78", r, 5)}{line("M12 86l32-28 32 28", b, 6)}{line("M43 48V32M36 38l7-7 7 7", k, 3)}</>],
  ["g", "Slide segment", <>{line("M16 58l18-40h26l18 40", r, 7)}{line("M6 86l10-26h60l12 26", b, 7)}{line("M45 50V32M38 38l7-7 7 7", k, 3)}</>],
  ["g", "Slide level", <>{line("M18 58l16-40h24l18 40", r, 7)}{line("M4 61h82", b, 7)}{line("M45 50V32M38 38l7-7 7 7M8 52l16 18M24 52L8 70M66 52l16 18M82 52L66 70", k, 3)}</>],
  ["o", "Select feature", <>{cursor(34, 18)}</>],
  ["o", "Select rectangle", <>{line("M14 12h62v62H14z", "#f01800", 4)}{cursor(34, 18)}</>],
  ["o", "Select polygon", <>{line("M34 12h42v62H34L16 58V30z", "#f01800", 4)}{cursor(34, 18)}</>],
  ["o", "Select net", <>{line("M20 6v38M20 72h20V46l10-10V20h18", k, 2)}<circle cx="20" cy="47" r="7" fill="#d02010" stroke={k} strokeWidth="2" /><circle cx="17" cy="71" r="7" fill="#20c020" stroke={k} strokeWidth="2" /><circle cx="70" cy="20" r="7" fill="#20d020" stroke={k} strokeWidth="2" />{cursor(56, 32)}</>],
];

function ToolButton({ label, tone, children }: { label: string; tone: string; children: React.ReactNode }) {
  const tones: Record<string, string> = {
    t: "bg-[#9cdbdb] border-t-[#c9f7f3] border-l-[#c9f7f3] border-b-[#52807f] border-r-[#52807f]",
    x: "bg-[#9cdbdb] border-[#a82020]",
    w: "bg-white border-t-white border-l-white border-b-[#a0a0a0] border-r-[#a0a0a0]",
    g: "bg-[#d0d0d0] border-t-[#f0f0f0] border-l-[#f0f0f0] border-b-[#8a8a8a] border-r-[#8a8a8a]",
    o: "bg-[#ffc44a] border-t-[#ffe2a0] border-l-[#ffe2a0] border-b-[#9a7428] border-r-[#9a7428]",
  };
  return (
    <button aria-label={label} className={`h-[38px] w-[38px] border-[3px] p-px ${tones[tone]}`}>
      <svg viewBox="0 0 90 90" className="h-[30px] w-[30px] overflow-visible">
        <rect x="1.500" y="1.500" width="87" height="87" fill="none" stroke="#000" strokeWidth="3" />
        {children}
      </svg>
    </button>
  );
}

function RightPanel() {
  return (
    <aside className={`z-10 flex w-[164px] shrink-0 flex-col bg-[#c4f0e4] text-[15px] ${MONO}`}>
      <div className="border-2 border-b-[#b5f2e2] border-l-[#2b6b58] border-r-[#b5f2e2] border-t-[#2b6b58]">
        <div className="grid grid-cols-4 gap-[2px] bg-black p-px">
          {VIEW_TOOLS.map(([n, c]) => <ToolButton key={n} label={n} tone="t">{c}</ToolButton>)}
          {SNAP_TOOLS.map(([n, c]) => <ToolButton key={n} label={n} tone="x">{c}</ToolButton>)}
        </div>
      </div>
      <div className="border-2 border-[#6a6a6a]">
        <div className="grid grid-cols-4 gap-[2px] bg-black p-px">
          {EDIT_TOOLS.map(([t, n, c]) => <ToolButton key={n} label={n} tone={t}>{c}</ToolButton>)}
        </div>
      </div>
      <div className="flex-1 overflow-hidden border-2 border-b-[#b5f2e2] border-l-[#2b6b58] border-r-[#b5f2e2] border-t-[#2b6b58] bg-black">
        <svg viewBox="1758 488 160 430" className="h-[430px] w-[160px]">
          <path d="M1920 662.500H1758.500V746.500H1920" fill="none" stroke="#3f8a20" />
          <rect x="1758" y="676" width="106" height="64" fill="#f00" />
          <rect x="1765.500" y="678.500" width="81" height="58" rx="2" fill="none" stroke="#3ce0e0" strokeWidth="2" />
          <path d="M1766 681V735M1846 681V735" stroke="#b0a8a8" strokeWidth="2" />
          <path d="M1763 734l7 7M1770 734l-7 7" stroke="#ddd" />
        </svg>
      </div>
      <div className={`h-[44px] bg-[#54cfb2] pl-[2px] pt-[6px] leading-[15px] ${IN_GREEN}`}>
        <div className="whitespace-pre">X = -1.545288"</div>
        <div className="whitespace-pre">Y = 4.609569"</div>
      </div>
    </aside>
  );
}

/* ---------- bottom bars ---------- */

function StatusButton({ label, green, d }: { label: string; green?: boolean; d: string }) {
  return (
    <div className={`w-[31px] border border-black p-px ${green ? "bg-[#54cfb2] px-[2px]" : "bg-[#ffffce]"}`}>
      <button aria-label={label} className={`flex h-full w-full items-center justify-center bg-[#ffffce] ${OUT_YELLOW}`}>
        <svg viewBox="0 0 20 20" className="h-5 w-5"><path d={d} fill="none" stroke="#000" /></svg>
      </button>
    </div>
  );
}

function StatusBar() {
  return (
    <footer className={MONO}>
      <div className="flex h-[35px] items-stretch border-y-2 border-black bg-[#ffffce] pl-px">
        <StatusButton label="Resize" d="M.5 1.500h19v17H.5zM4 4l12 12M4 9V4h5M16 11v5h-5" />
        <StatusButton label="Angle" d="M.5 1.500h19v17H.5zM3 16L16 4M6 8v8h11M10 10l7 6" />
        <StatusButton label="Snap grid" green d="M.5 1.500h19v17H.5zM10 3v15M3 11h15M3 8L8 3h9v14H3z" />
        <label className="flex items-center gap-[10px] pl-1 pr-px text-[12px]">
          <span className="w-[36px] whitespace-nowrap">X Y :</span>
          <span className={`relative block h-[28px] w-[170px] ${IN_YELLOW}`}><Beam /><input className="block w-full bg-transparent pl-[6px] text-[15px] outline-none" /></span>
        </label>
        <div className="ml-px flex"><StatusButton label="Alerts" green d="M2.500 1.500h15v17h-15zM10 4v9M10 15v2M11 4v9M11 15v2" /></div>
        <p className="flex-1 whitespace-pre border-l border-black bg-[#ffffce] pl-[2px] pt-[2px] text-[12px] leading-[13px]">
          {"<M1> - Select feature to highlight ; <M1><M1> - Highlight identical\n<Shift+M1> - Add to highlight ; <M2> - Cancel highlight"}
        </p>
        <div className="flex w-[80px] items-center border-l-2 border-black bg-[#54cfb2] pl-[5px] pr-[3px] text-[15px]">
          <Picker label="Units" value="Inch" box={OUT_GREEN} mark={MARK_GREEN} />
        </div>
      </div>
      <div className="border-2 border-b-[#b9f2ee] border-l-[#6c8c8c] border-r-[#b9f2ee] border-t-[#6c8c8c]">
        <div className="border border-black bg-[#b2ffff] p-[2px]">
          <div className="h-[22px] border-2 border-b-[#5c9a9c] border-l-[#d8ffff] border-r-[#5c9a9c] border-t-[#d8ffff] bg-[#b2ffff]" />
        </div>
      </div>
      <div className="h-2 bg-[#ffffce]" />
    </footer>
  );
}

export default function App() {
  return (
    <div className="flex min-h-screen flex-col bg-black text-black">
      <TitleBar />
      <MenuBar />
      <div className="flex flex-1">
        <LeftPanel />
        <main className="relative flex-1 overflow-hidden bg-black">
          <Board />
          <DrillDialog />
        </main>
        <RightPanel />
      </div>
      <StatusBar />
    </div>
  );
}
